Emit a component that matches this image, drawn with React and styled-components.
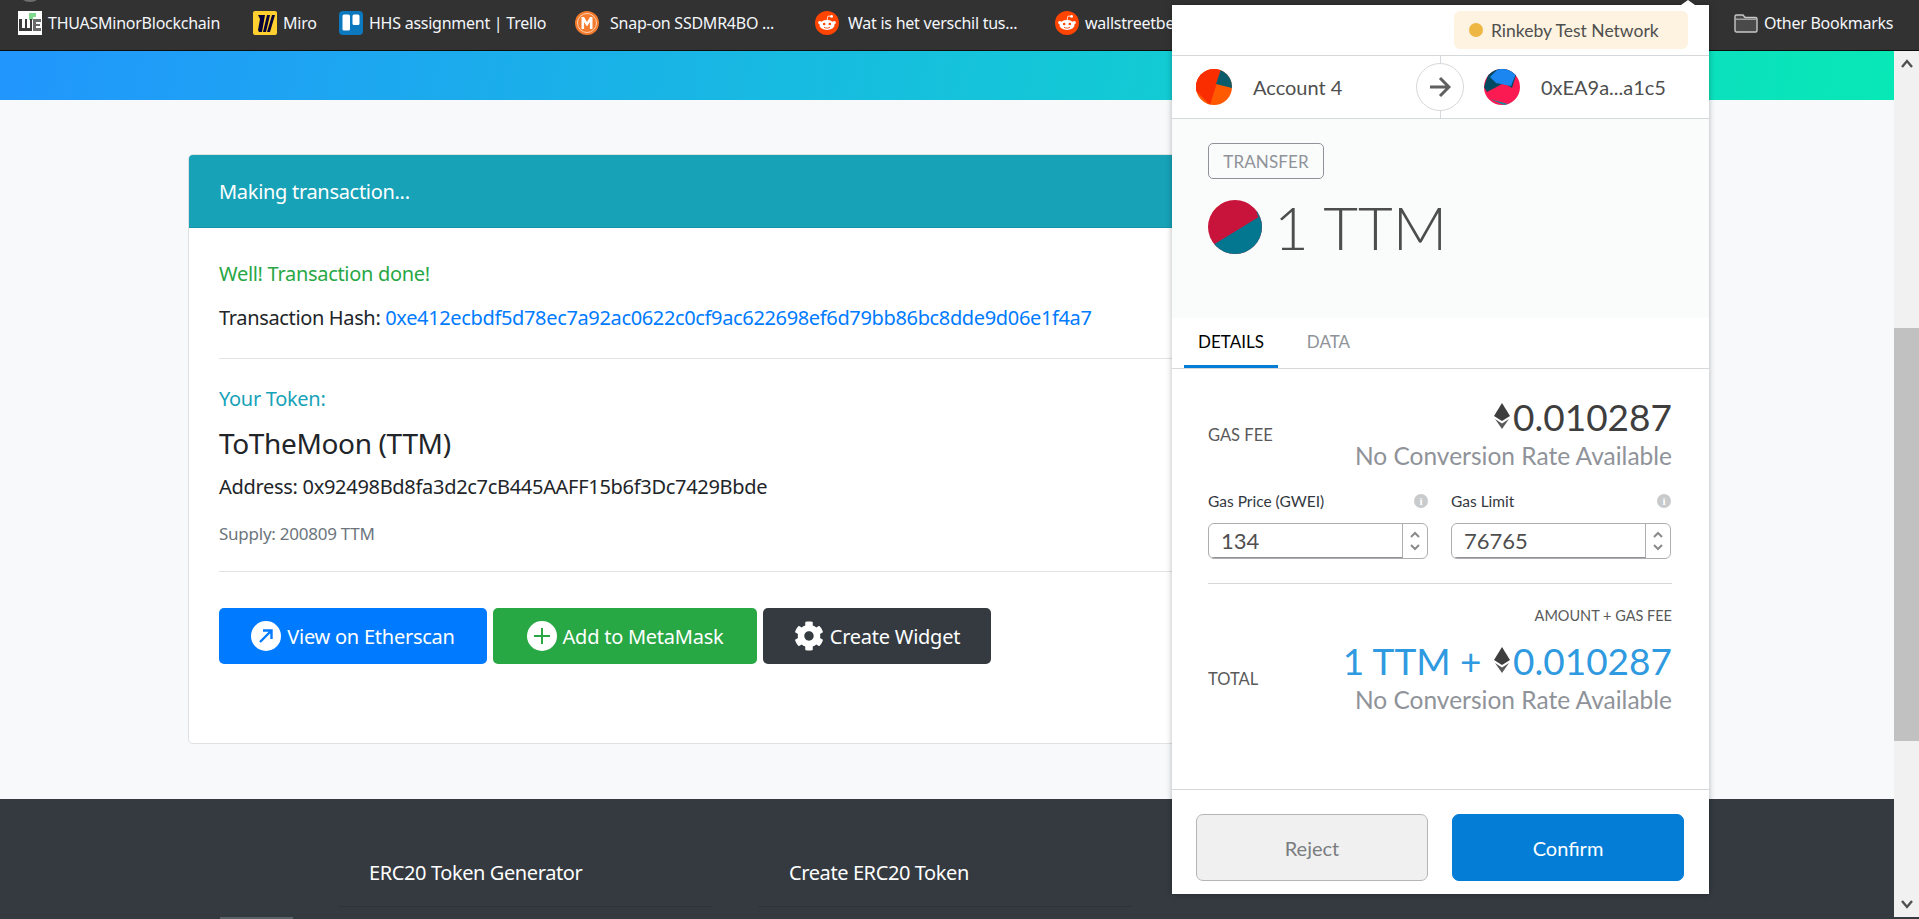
import React from "react";
import styled, { createGlobalStyle } from "styled-components";
import { FaCog } from "react-icons/fa";

const Global = createGlobalStyle`
  html, body { margin: 0; padding: 0; overflow: hidden; background: #343a40; }
  * { box-sizing: border-box; }
`;

const SEGOE = `"Noto Sans", "Open Sans", sans-serif`;
const EUCLID = `Lato, "Noto Sans", sans-serif`;

const Screen = styled.div`
  position: relative; width: 1919px; height: 919px; overflow: hidden;
  display: flex; flex-direction: column; font-family: ${SEGOE};
`;
const BookmarkBar = styled.div`
  position: relative; height: 51px; flex: none; background: #323233; border-bottom: 1px solid #0d0d0d;
  display: flex; align-items: center; padding: 0 0 4px 18px; overflow: hidden;
`;
const TopKnob = styled.span`
  position: absolute; left: 20px; top: -12px; width: 20px; height: 14px; border-radius: 50%; background: #6e6e6e;
`;
const Mark = styled.a`
  display: flex; align-items: center; flex: none; color: #f4f6fa; font-size: 16px; letter-spacing: -0.25px;
  gap: ${p => p.$gap || 6}px; width: ${p => p.$w}px; white-space: nowrap;
`;
const OtherMarks = styled(Mark)`
  position: absolute; left: 1734px; top: 0; height: 50px; padding-bottom: 4px;
`;
const Body = styled.div`
  flex: 1; display: flex; min-height: 0;
`;
const Page = styled.div`
  flex: 1; display: flex; flex-direction: column; min-width: 0;
`;
const Hero = styled.div`
  height: 49px; flex: none; background: linear-gradient(100deg, #2196fd 0%, #14c6d8 55%, #08e8b6 100%);
`;
const Main = styled.div`
  height: 699px; flex: none; background: #f8f9fa; padding: 54px 188px 0;
`;
const Card = styled.section`
  height: 590px; background: #fff; border: 1px solid #dfe1e3; border-radius: 5px; overflow: hidden;
`;
const CardHeader = styled.header`
  height: 73px; background: #17a2b8; color: #fff; font-size: 20px; letter-spacing: -0.3px;
  padding: 0 30px; display: flex; align-items: center; border-bottom: 1px solid #1594a8;
`;
const CardBody = styled.div`
  padding: 29px 30px 0; color: #212529;
`;
const Success = styled.div`
  color: #28a745; font-size: 20px; letter-spacing: -0.3px; line-height: 34px;
`;
const HashLine = styled.div`
  font-size: 20px; letter-spacing: -0.35px; line-height: 34px; margin-top: 10px; white-space: nowrap;
  a { color: #007bff; }
`;
const Rule = styled.hr`
  border: 0; border-top: 1px solid #e2e3e5; margin: ${p => p.$top}px 0 ${p => p.$bottom}px;
`;
const TokenLabel = styled.div`
  color: #17a2b8; font-size: 20px; letter-spacing: -0.3px; line-height: 34px;
`;
const TokenName = styled.div`
  font-size: 28px; letter-spacing: -0.35px; line-height: 40px; margin-top: 7px;
`;
const AddressLine = styled.div`
  font-size: 20px; letter-spacing: -0.3px; line-height: 34px; margin-top: 7px; white-space: nowrap;
`;
const Supply = styled.div`
  color: #6c757d; font-size: 17px; letter-spacing: -0.25px; line-height: 28px; margin-top: 16px;
`;
const Actions = styled.div`
  display: flex; gap: 6px;
`;
const ActionButton = styled.button`
  height: 56px; width: ${p => p.$w}px; flex: none; border: 0; border-radius: 5px; background: ${p => p.$bg};
  color: #fff; font-family: ${SEGOE}; font-size: 20px; letter-spacing: -0.25px;
  display: flex; align-items: center; justify-content: center; gap: 6px; padding: 0;
`;
const Footer = styled.footer`
  flex: 1; background: #343a40; color: #fff; display: flex; gap: 45px; padding: 56px 0 0 338px; position: relative;
`;
const FooterCol = styled.div`
  width: 375px; height: 52px; border-bottom: 1px solid #2e3338; padding-left: 31px;
  font-size: 20px; letter-spacing: -0.4px; line-height: 36px; white-space: nowrap;
`;
const FooterTab = styled.span`
  position: absolute; left: 220px; bottom: 0; width: 73px; height: 2px; background: #5a6268;
`;
const ScrollBar = styled.aside`
  width: 25px; flex: none; background: #f1f1f1; display: flex; flex-direction: column; align-items: stretch;
  margin-bottom: 2px;
`;
const ScrollArrow = styled.div`
  height: 25px; flex: none; display: flex; align-items: center; justify-content: center;
`;
const ScrollTrack = styled.div`
  flex: 1; padding-top: 252px;
`;
const ScrollThumb = styled.div`
  height: 413px; background: #c1c1c1;
`;

/* MetaMask popup — an overlay over the page */
const Popup = styled.div`
  position: absolute; left: 1172px; top: 5px; width: 537px; height: 889px; background: #fff;
  display: flex; flex-direction: column; font-family: ${EUCLID}; box-shadow: 0 0 6px rgba(0,0,0,.28);
  &::before {
    content: ""; position: absolute; right: 14px; top: -5px; width: 0; height: 0;
    border-left: 7px solid transparent; border-right: 7px solid transparent; border-bottom: 5px solid #fff;
  }
`;
const PopupTop = styled.div`
  height: 50px; flex: none; display: flex; justify-content: flex-end; padding: 6px 21px 0 0;
`;
const NetworkPill = styled.div`
  height: 38px; width: 234px; border-radius: 6px; background: #fdf3e0; color: #4f4f4f;
  display: flex; align-items: center; gap: 8px; padding-left: 15px; font-size: 17.5px; white-space: nowrap;
`;
const NetworkDot = styled.span`
  width: 14px; height: 14px; border-radius: 50%; background: #eeb744; flex: none;
`;
const PartiesRow = styled.div`
  position: relative; height: 64px; flex: none; border-top: 1px solid #d6d9dc; border-bottom: 1px solid #d6d9dc;
  display: flex; align-items: center; padding-left: 24px; color: #4f4f4f; font-size: 20px; white-space: nowrap;
`;
const Party = styled.div`
  display: flex; align-items: center; gap: ${p => p.$gap}px; width: ${p => p.$w}px; flex: none;
`;
const Avatar = styled.svg`
  width: ${p => p.$size}px; height: ${p => p.$size}px; border-radius: 50%; flex: none; display: block;
`;
const ArrowHolder = styled.div`
  position: relative; width: 48px; height: 62px; flex: none; display: flex; align-items: center; justify-content: center;
  margin-right: 20px;
  &::before {
    content: ""; position: absolute; left: 50%; top: 0; bottom: 0; width: 1px; background: #d6d9dc;
  }
`;
const ArrowCircle = styled.div`
  position: relative; width: 48px; height: 48px; border-radius: 50%; background: #fff; border: 1px solid #d6d9dc;
  display: flex; align-items: center; justify-content: center;
`;
const Summary = styled.div`
  height: 199px; flex: none; background: #fafbfb; padding: 24px 36px 0;
`;
const ActionBadge = styled.div`
  display: inline-flex; align-items: center; justify-content: center; width: 116px; height: 36px;
  border: 1px solid #8f9399; border-radius: 5px; color: #8f9399; font-size: 17px; letter-spacing: 0.1px;
`;
const AmountRow = styled.div`
  display: flex; align-items: center; gap: 12px; margin-top: 21px; color: #4d4d4d;
  font-size: 60px; line-height: 54px; font-weight: 300; white-space: nowrap;
`;
const Tabs = styled.div`
  height: 51px; flex: none; display: flex; padding-left: 12px; border-bottom: 1px solid #d6d9dc;
`;
const Tab = styled.div`
  height: 50px; width: ${p => p.$w}px; display: flex; align-items: center; justify-content: center;
  font-size: 17px; color: ${p => (p.$active ? "#000" : "#8f9399")};
  border-bottom: 3px solid ${p => (p.$active ? "#037dd6" : "transparent")};
`;
const Details = styled.div`
  flex: 1; display: flex; flex-direction: column; padding: 26px 37px 0 36px; min-height: 0;
`;
const CostRow = styled.div`
  display: flex; justify-content: space-between; align-items: ${p => p.$align || "center"}; flex: none;
`;
const CostLabel = styled.div`
  color: #5a5a5a; font-size: 16.5px; padding-top: ${p => p.$top}px;
`;
const CostValues = styled.div`
  display: flex; flex-direction: column; align-items: flex-end; white-space: nowrap;
`;
const EthValue = styled.div`
  display: flex; align-items: center; gap: 3px; height: 42px; font-size: 37px; color: ${p => p.$color || "#3e3e3e"};
`;
const Conversion = styled.div`
  height: 38px; line-height: 38px; font-size: 24.5px; color: #8f9399;
`;
const Fields = styled.div`
  display: grid; grid-template-columns: 220px 220px; column-gap: 23px; margin-top: 16px; flex: none;
`;
const Field = styled.div`
  display: flex; flex-direction: column; gap: 12px;
`;
const FieldLabel = styled.div`
  height: 20px; display: flex; align-items: center; justify-content: space-between; color: #33383f; font-size: 15.5px;
`;
const InfoDot = styled.span`
  width: 14px; height: 14px; border-radius: 50%; background: #c9cacc; color: #fff; font-size: 11px; font-weight: 900;
  display: flex; align-items: center; justify-content: center; font-family: "Liberation Serif", serif;
`;
const NumberBox = styled.div`
  height: 36px; display: flex; border: 1px solid #aeaeb0; border-radius: 6px; overflow: hidden; color: #4f4f4f;
  font-size: 22px; align-items: stretch;
`;
const NumberValue = styled.div`
  flex: 1; padding-left: 12px; display: flex; align-items: center; border-right: 1px solid #aeaeb0; border-bottom: 1px solid #8f9399;
`;
const Stepper = styled.div`
  width: 24px; display: flex; flex-direction: column; align-items: center; justify-content: center; gap: 6px;
`;
const DetailRule = styled.hr`
  border: 0; border-top: 1px solid #d6d9dc; margin: 24px 0 22px; width: 464px; flex: none;
`;
const SmallCaption = styled.div`
  height: 20px; line-height: 20px; text-align: right; color: #5a5a5a; font-size: 14.5px; margin-bottom: 13px; flex: none;
`;
const PopupFooter = styled.div`
  height: 105px; flex: none; border-top: 1px solid #d6d9dc; display: flex; gap: 24px; padding: 24px 25px 0 24px;
`;
const PopupButton = styled.button`
  width: 232px; height: 67px; border-radius: 7px; font-family: ${EUCLID}; font-size: 20px;
  background: ${p => (p.$primary ? "#037dd6" : "#f0f0f0")};
  color: ${p => (p.$primary ? "#fff" : "#7a7d80")};
  border: 1px solid ${p => (p.$primary ? "#037dd6" : "#b5b5b5")};
`;

const Icon = styled.svg`
  flex: none; display: block;
`;

const WeIcon = () => (
  <Icon width="24" height="24" viewBox="0 0 24 24">
    <rect width="24" height="24" fill="#fff" />
    <path d="M11 2h7v4h-3v3h-4z" fill="#7fd98c" />
    <path d="M1 8h3v9h3V8h2v9h3V8h2v12H1z" fill="#3a3a3a" />
    <path d="M15 8h8v3h-5v2h4v2h-4v2h5v3h-8z" fill="#6a6a6a" />
  </Icon>
);
const MiroIcon = () => (
  <Icon width="24" height="24" viewBox="0 0 24 24">
    <rect width="24" height="24" rx="2" fill="#ffd02f" />
    <path d="M9 4h3l-3 17H6L5 19 7 8 5 4zM14 4h3l-4 17h-3zM19 4h3l-5 17h-3z" fill="#050038" />
  </Icon>
);
const TrelloIcon = () => (
  <Icon width="24" height="24" viewBox="0 0 24 24">
    <rect width="24" height="24" rx="4" fill="#0c79bf" />
    <rect x="3.5" y="3.5" width="7.5" height="16" rx="1.5" fill="#fff" />
    <rect x="13.5" y="3.5" width="7" height="10.5" rx="1.5" fill="#fff" />
  </Icon>
);
const SnapIcon = () => (
  <Icon width="24" height="24" viewBox="0 0 24 24">
    <circle cx="12" cy="12" r="12" fill="#f47a2c" />
    <circle cx="12" cy="12" r="9.5" fill="none" stroke="#fbd2b4" strokeWidth="1" />
    <path d="M6.5 18V6h2.5l3 5 3-5h2.5v12h-2.6v-7l-2.9 4.5-2.9-4.5v7z" fill="#fff" />
  </Icon>
);
const RedditIcon = () => (
  <Icon width="24" height="24" viewBox="0 0 24 24">
    <circle cx="12" cy="12" r="12" fill="#ff4500" />
    <ellipse cx="12" cy="14" rx="7.5" ry="5" fill="#fff" />
    <circle cx="4.8" cy="11.6" r="1.7" fill="#fff" />
    <circle cx="19.2" cy="11.6" r="1.7" fill="#fff" />
    <circle cx="16.6" cy="5.4" r="1.4" fill="#fff" />
    <path d="M12 9.5 13 5l3.5.5" fill="none" stroke="#fff" strokeWidth=".8" />
    <circle cx="9.2" cy="13" r="1.3" fill="#ff4500" />
    <circle cx="14.8" cy="13" r="1.3" fill="#ff4500" />
    <path d="M9 16.2c1.8 1.2 4.2 1.2 6 0" fill="none" stroke="#ff4500" strokeWidth=".9" />
  </Icon>
);
const FolderIcon = () => (
  <Icon width="24" height="20" viewBox="0 0 24 20">
    <path d="M1 3.5A1.5 1.5 0 0 1 2.5 2H9l2 2.5h10.5A1.5 1.5 0 0 1 23 6v11.5a1.5 1.5 0 0 1-1.5 1.5h-19A1.5 1.5 0 0 1 1 17.500z" fill="#4a4a4a" stroke="#c8c8c8" strokeWidth="1.4" />
    <path d="M1.500 6.200h21" stroke="#c8c8c8" strokeWidth="1" />
  </Icon>
);
const EthIcon = ({ w = 16, h = 26, color = "#3e3e3e" }) => (
  <Icon width={w} height={h} viewBox="0 0 16 26">
    <path d="M8 0 16 13 8 18 0 13z" fill={color} />
    <path d="M1 16 8 20.500 15 16 8 26z" fill={color} opacity=".85" />
  </Icon>
);
const ChevronUp = () => (
  <Icon width="10" height="7" viewBox="0 0 10 7"><path d="M1 6l4-4 4 4" fill="none" stroke="#8a8a8a" strokeWidth="2" /></Icon>
);
const ChevronDown = () => (
  <Icon width="10" height="7" viewBox="0 0 10 7"><path d="M1 1l4 4 4-4" fill="none" stroke="#8a8a8a" strokeWidth="2" /></Icon>
);
const ScrollChevron = ({ d }) => (
  <Icon width="12" height="9" viewBox="0 0 12 9"><path d={d} fill="none" stroke="#505050" strokeWidth="2.4" /></Icon>
);

const AccountAvatar = () => (
  <Avatar $size={36} viewBox="0 0 36 36">
    <rect width="36" height="36" fill="#ff5a00" />
    <path d="M0 0h25L14 36 0 22z" fill="#fa2d00" />
    <path d="M0 22 14 30 20 17 0 0z" fill="#fa2d00" />
    <path d="M25 0 20 15 36 19V0z" fill="#0c5d6b" />
    <path d="M29 2 36 9V2z" fill="#1495a8" />
  </Avatar>
);
const RecipientAvatar = () => (
  <Avatar $size={36} viewBox="0 0 36 36">
    <rect width="36" height="36" fill="#fb1a52" />
    <path d="M0 18 6 0H34L28 19 20 14 3 23z" fill="#034a60" />
    <path d="M6 8 14 0H34L27 17 12 14z" fill="#1b86f0" />
    <path d="M6 30 20 36H36V30L24 35z" fill="#128c9c" />
  </Avatar>
);
const TokenAvatar = () => (
  <Avatar $size={54} viewBox="0 0 54 54">
    <rect width="54" height="54" fill="#c8143a" />
    <path d="M0 48 54 15V54H0z" fill="#02778f" />
    <path d="M0 0h16L2 14 0 16z" fill="#f4c400" />
    <path d="M46 0 54 15 50 17z" fill="#02778f" />
  </Avatar>
);
const ArrowRightIcon = () => (
  <Icon width="22" height="22" viewBox="0 0 22 22">
    <path d="M1 11h18M11 2l9 9-9 9" fill="none" stroke="#5f5f5f" strokeWidth="3" />
  </Icon>
);
const UpRightCircle = () => (
  <Icon width="30" height="30" viewBox="0 0 30 30">
    <circle cx="15" cy="15" r="15" fill="#fff" />
    <path d="M9 21 20 10M12 9.500h8.500V18" fill="none" stroke="#007bff" strokeWidth="2.400" />
  </Icon>
);
const PlusCircle = () => (
  <Icon width="30" height="30" viewBox="0 0 30 30">
    <circle cx="15" cy="15" r="15" fill="#fff" />
    <path d="M15 7v16M7 15h16" fill="none" stroke="#28a745" strokeWidth="2" />
  </Icon>
);
const Gear = styled(FaCog)`
  width: 30px; height: 30px; color: #fff; flex: none;
`;

export default function App() {
  return (
    <Screen>
      <Global />
      <BookmarkBar>
        <TopKnob />
        <Mark $w={235}><WeIcon />THUASMinorBlockchain</Mark>
        <Mark $w={86}><MiroIcon />Miro</Mark>
        <Mark $w={236}><TrelloIcon />HHS assignment | Trello</Mark>
        <Mark $w={240} $gap={11}><SnapIcon />Snap-on SSDMR4BO ...</Mark>
        <Mark $w={240} $gap={9}><RedditIcon />Wat is het verschil tus...</Mark>
        <Mark $w={160}><RedditIcon />wallstreetbets</Mark>
        <OtherMarks $w={170}><FolderIcon />Other Bookmarks</OtherMarks>
      </BookmarkBar>
      <Body>
        <Page>
          <Hero />
          <Main>
            <Card>
              <CardHeader>Making transaction...</CardHeader>
              <CardBody>
                <Success>Well! Transaction done!</Success>
                <HashLine>Transaction Hash: <a>0xe412ecbdf5d78ec7a92ac0622c0cf9ac622698ef6d79bb86bc8dde9d06e1f4a7</a></HashLine>
                <Rule $top={23} $bottom={23} />
                <TokenLabel>Your Token:</TokenLabel>
                <TokenName>ToTheMoon (TTM)</TokenName>
                <AddressLine>Address: 0x92498Bd8fa3d2c7cB445AAFF15b6f3Dc7429Bbde</AddressLine>
                <Supply>Supply: 200809 TTM</Supply>
                <Rule $top={23} $bottom={36} />
                <Actions>
                  <ActionButton $bg="#007bff" $w={268}><UpRightCircle />View on Etherscan</ActionButton>
                  <ActionButton $bg="#28a745" $w={264}><PlusCircle />Add to MetaMask</ActionButton>
                  <ActionButton $bg="#343a40" $w={228}><Gear />Create Widget</ActionButton>
                </Actions>
              </CardBody>
            </Card>
          </Main>
          <Footer>
            <FooterCol>ERC20 Token Generator</FooterCol>
            <FooterCol>Create ERC20 Token</FooterCol>
            <FooterTab />
          </Footer>
        </Page>
        <ScrollBar>
          <ScrollArrow><ScrollChevron d="M1 8l5-6 5 6" /></ScrollArrow>
          <ScrollTrack><ScrollThumb /></ScrollTrack>
          <ScrollArrow><ScrollChevron d="M1 1l5 6 5-6" /></ScrollArrow>
        </ScrollBar>
      </Body>
      <Popup>
        <PopupTop>
          <NetworkPill><NetworkDot />Rinkeby Test Network</NetworkPill>
        </PopupTop>
        <PartiesRow>
          <Party $w={220} $gap={21}><AccountAvatar />Account 4</Party>
          <ArrowHolder><ArrowCircle><ArrowRightIcon /></ArrowCircle></ArrowHolder>
          <Party $w={200} $gap={21}><RecipientAvatar />0xEA9a...a1c5</Party>
        </PartiesRow>
        <Summary>
          <ActionBadge>TRANSFER</ActionBadge>
          <AmountRow><TokenAvatar />1 TTM</AmountRow>
        </Summary>
        <Tabs>
          <Tab $active $w={94}>DETAILS</Tab>
          <Tab $w={101}>DATA</Tab>
        </Tabs>
        <Details>
          <CostRow>
            <CostLabel $top={0}>GAS FEE</CostLabel>
            <CostValues>
              <EthValue><EthIcon />0.010287</EthValue>
              <Conversion>No Conversion Rate Available</Conversion>
            </CostValues>
          </CostRow>
          <Fields>
            <Field>
              <FieldLabel>Gas Price (GWEI)<InfoDot>i</InfoDot></FieldLabel>
              <NumberBox><NumberValue>134</NumberValue><Stepper><ChevronUp /><ChevronDown /></Stepper></NumberBox>
            </Field>
            <Field>
              <FieldLabel>Gas Limit<InfoDot>i</InfoDot></FieldLabel>
              <NumberBox><NumberValue>76765</NumberValue><Stepper><ChevronUp /><ChevronDown /></Stepper></NumberBox>
            </Field>
          </Fields>
          <DetailRule />
          <SmallCaption>AMOUNT + GAS FEE</SmallCaption>
          <CostRow>
            <CostLabel $top={0}>TOTAL</CostLabel>
            <CostValues>
              <EthValue $color="#2f9ae0">1 TTM +&nbsp;<EthIcon />0.010287</EthValue>
              <Conversion>No Conversion Rate Available</Conversion>
            </CostValues>
          </CostRow>
        </Details>
        <PopupFooter>
          <PopupButton>Reject</PopupButton>
          <PopupButton $primary>Confirm</PopupButton>
        </PopupFooter>
      </Popup>
    </Screen>
  );
}
